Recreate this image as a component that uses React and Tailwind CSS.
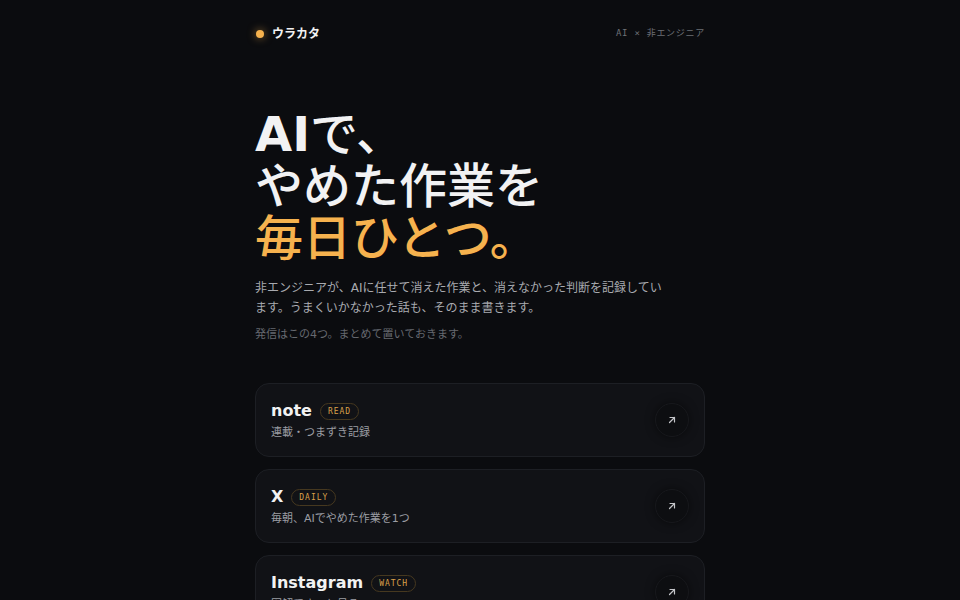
import React from 'react';

const links = [
  { name: 'note', tag: 'READ', desc: '連載・つまずき記録' },
  { name: 'X', tag: 'DAILY', desc: '毎朝、AIでやめた作業を1つ' },
  { name: 'Instagram', tag: 'WATCH', desc: '図解でさっと見る' },
];

function ArrowUpRight() {
  return (
    <svg width="12" height="12" viewBox="0 0 24 24" fill="none" stroke="currentColor" strokeWidth="2.4" strokeLinecap="round" strokeLinejoin="round">
      <path d="M7 17 17 7" />
      <path d="M8 7h9v9" />
    </svg>
  );
}

function LinkCard({ name, tag, desc }) {
  return (
    <a href="#" className="flex items-center justify-between rounded-[14px] border border-[#1d1f24] bg-[#111216] py-[15px] pl-[15px] pr-[15px]">
      <div>
        <div className="flex items-center gap-2 h-6">
          <span className="text-[16px] font-bold text-[#f2f2f3] leading-6">{name}</span>
          <span className="rounded-full border border-[#46381f] px-[7px] py-[3px] font-['DejaVu_Sans_Mono',monospace] text-[8px] leading-[9px] tracking-[0.12em] text-[#d9a04a]">
            {tag}
          </span>
        </div>
        <p className="mt-0.5 text-[11px] leading-4 text-[#9b9da3]">{desc}</p>
      </div>
      <div className="flex h-[34px] w-[34px] items-center justify-center rounded-full border border-[#17181c] bg-[#0d0e11] text-[#c4c5c9] shadow-[0_0_10px_rgba(0,0,0,0.5)]">
        <ArrowUpRight />
      </div>
    </a>
  );
}

export default function App() {
  return (
    <div className="min-h-screen bg-[#0b0c0f] font-['DejaVu_Sans','Noto_Sans_CJK_JP',sans-serif] text-[#f2f2f3]">
      <div className="mx-auto w-[450px] pt-6 pb-16">
        {/* HEADER */}
        <header className="flex h-5 items-center justify-between">
          <div className="flex items-center gap-2">
            <span className="ml-px h-2 w-2 rounded-full bg-[#f6b24e] shadow-[0_0_8px_rgba(246,178,78,0.6)]" />
            <span className="text-[12px] font-bold">ウラカタ</span>
          </div>
          <span className="font-['DejaVu_Sans_Mono','Noto_Sans_CJK_JP',monospace] text-[9px] tracking-[0.08em] text-[#6d7076]">
            AI × 非エンジニア
          </span>
        </header>

        {/* HERO */}
        <section className="mt-[64px]">
          <h1 className="text-[48px] font-medium leading-[52px]">
            <span className="font-bold">AI</span>で、
            <br />
            やめた作業を
            <br />
            <span className="text-[#f6b24e]">毎日ひとつ。</span>
          </h1>
          <p className="mt-[14px] max-w-[412px] text-[12px] leading-5 text-[#a8aaaf]">
            非エンジニアが、AIに任せて消えた作業と、消えなかった判断を記録しています。うまくいかなかった話も、そのまま書きます。
          </p>
          <p className="mt-2 text-[11px] leading-[18px] text-[#66696f]">発信はこの4つ。まとめて置いておきます。</p>
        </section>

        {/* LINKS */}
        <nav className="mt-[39px] flex flex-col gap-3">
          {links.map((l) => (
            <LinkCard key={l.name} {...l} />
          ))}
        </nav>
      </div>
    </div>
  );
}
